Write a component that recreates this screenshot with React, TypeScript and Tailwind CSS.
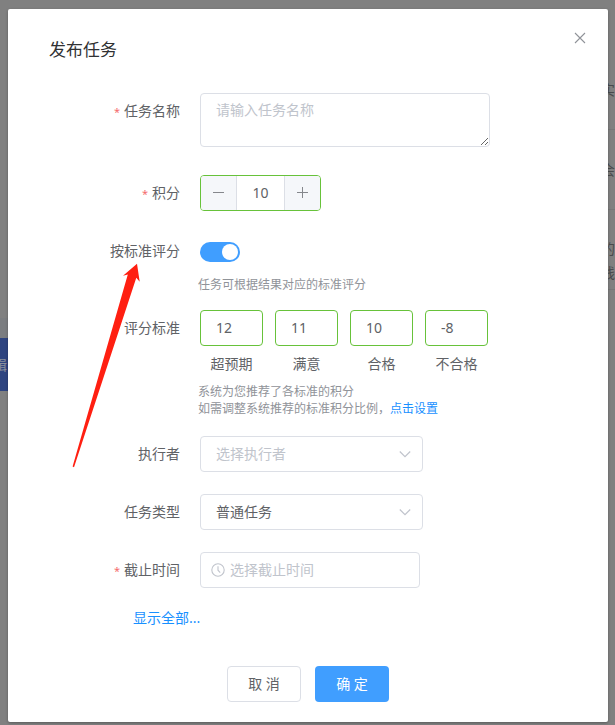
import React, { useState } from 'react';

const scores = [
  { id: 'score-great', value: '12', label: '超预期' },
  { id: 'score-good', value: '11', label: '满意' },
  { id: 'score-pass', value: '10', label: '合格' },
  { id: 'score-fail', value: '-8', label: '不合格' },
];

const FormItem = ({ id, label, required, className = '', children }: any) => (
  <div className={`flex ${className}`}>
    <label htmlFor={id} className="w-[172px] shrink-0 text-right text-sm leading-9 text-[#606266]">
      {required && <span className="mr-1 text-[11px] leading-none text-[#f56c6c]">*</span>}
      {label}
    </label>
    <div className="ml-5 min-w-0 flex-1">{children}</div>
  </div>
);

const SelectBox = ({ id, value, muted }: any) => (
  <div className="relative w-[223px]">
    <select
      id={id}
      className={`h-9 w-full appearance-none rounded border border-[#dcdfe6] bg-white px-[15px] text-sm outline-none ${muted ? 'text-[#c0c4cc]' : 'text-[#606266]'}`}
    >
      <option>{value}</option>
    </select>
    <svg className="pointer-events-none absolute top-3 right-3 h-3 w-3" viewBox="0 0 12 12" fill="none" stroke="#c0c4cc" strokeWidth="1.2">
      <path d="M0.8 3.5 L6 8.7 L11.2 3.5" />
    </svg>
  </div>
);

// the dimmed page that sits under the dialog
const Backdrop = () => (
  <div aria-hidden="true" className="absolute inset-0 flex justify-between overflow-hidden text-sm text-[#4a4b4d]">
    <div className="w-2 pt-[318px]">
      <div className="h-5 bg-[#7b7d80]" />
      <div className="flex h-[53px] items-center justify-end overflow-hidden bg-[#2e4480] pr-px text-[#8a8f9b]">
        <span className="shrink-0">辑</span>
      </div>
    </div>
    <div className="w-[14px] overflow-hidden pt-[50px] whitespace-nowrap">
      <div className="flex h-20 items-center border-b border-[#777] leading-6">实</div>
      <div className="flex h-20 items-center border-b border-[#777] leading-6">会</div>
      <div className="flex h-20 flex-col justify-end border-b border-[#777] pb-1 leading-6">
        <span>的</span>
        <span>线</span>
      </div>
    </div>
  </div>
);

export default function App() {
  const [points, setPoints] = useState(10);
  const [standard, setStandard] = useState(true);

  return (
    <div className="relative min-h-screen bg-[#808080] pt-[9px] pr-[7px] pb-[3px] pl-2 font-['Noto_Sans','Noto_Sans_CJK_SC',sans-serif]">
      <Backdrop />
      <div role="dialog" aria-labelledby="dialog-title" className="relative mx-auto max-w-[600px] rounded-xs bg-white pb-5 shadow-[0_1px_3px_rgba(0,0,0,0.3)]">
        <header className="flex items-start justify-between pt-[21px] pr-5 pl-[41px]">
          <h2 id="dialog-title" className="pt-2 text-[17px] leading-6 text-[#303133]">发布任务</h2>
          <button type="button" aria-label="关闭" className="flex h-4 w-4 items-center justify-center">
            <svg className="h-3 w-3" viewBox="0 0 12 12" fill="none" stroke="#909399" strokeWidth="1.1">
              <path d="M1 1 L11 11 M11 1 L1 11" />
            </svg>
          </button>
        </header>

        <form className="pt-[31px]">
          <FormItem id="name" label="任务名称" required className="mb-7">
            <textarea
              id="name"
              placeholder="请输入任务名称"
              className="block h-[54px] w-[290px] resize rounded border border-[#dcdfe6] px-[15px] py-[5px] text-sm leading-[21px] text-[#606266] outline-none placeholder:text-[#c0c4cc]"
            />
          </FormItem>

          <FormItem id="points" label="积分" required className="mb-[22px]">
            <div className="flex h-9 w-[121px] overflow-hidden rounded border border-[#67c23a]">
              <button type="button" aria-label="减少" onClick={() => setPoints(points - 1)} className="flex w-9 shrink-0 items-center justify-center border-r border-[#dcdfe6] bg-[#f5f7fa]">
                <svg className="h-3 w-3" viewBox="0 0 12 12" stroke="#85878c" strokeWidth="1">
                  <path d="M0 5.5 H11" />
                </svg>
              </button>
              <input id="points" value={points} onChange={(e) => setPoints(Number(e.target.value) || 0)} className="min-w-0 flex-1 text-center text-sm text-[#606266] outline-none" />
              <button type="button" aria-label="增加" onClick={() => setPoints(points + 1)} className="flex w-9 shrink-0 items-center justify-center border-l border-[#dcdfe6] bg-[#f5f7fa]">
                <svg className="h-3 w-3" viewBox="0 0 12 12" stroke="#85878c" strokeWidth="1">
                  <path d="M0 5.5 H11 M5.5 0 V11" />
                </svg>
              </button>
            </div>
          </FormItem>

          <FormItem id="standard" label="按标准评分" className="mb-[17px]">
            <div className="flex h-9 items-center pt-0.5">
              <input
                id="standard"
                type="checkbox"
                role="switch"
                checked={standard}
                onChange={(e) => setStandard(e.target.checked)}
                className="h-5 w-10 appearance-none rounded-full bg-[#dcdfe6] p-0.5 before:block before:h-4 before:w-4 before:rounded-full before:bg-white checked:bg-[#409eff] checked:before:ml-5"
              />
            </div>
            <p className="mt-[7px] -ml-0.5 text-xs leading-[17px] text-[#909399]">任务可根据结果对应的标准评分</p>
          </FormItem>

          <FormItem id="score-great" label="评分标准" className="mb-[19px]">
            <div className="flex gap-3">
              {scores.map((item) => (
                <div key={item.id} className="w-[63px]">
                  <input id={item.id} defaultValue={item.value} className="block h-9 w-full rounded border border-[#67c23a] px-[15px] pb-0.5 text-sm text-[#606266] outline-none" />
                  <label htmlFor={item.id} className="block text-center text-sm leading-9 text-[#606266]">{item.label}</label>
                </div>
              ))}
            </div>
            <p className="mt-px -ml-0.5 text-xs leading-[17px] text-[#909399]">
              系统为您推荐了各标准的积分
              <br />
              如需调整系统推荐的标准积分比例，<a href="#settings" className="text-[#1890ff]">点击设置</a>
            </p>
          </FormItem>

          <FormItem id="assignee" label="执行者" className="mb-[22px]">
            <SelectBox id="assignee" value="选择执行者" muted />
          </FormItem>

          <FormItem id="type" label="任务类型" className="mb-[22px]">
            <SelectBox id="type" value="普通任务" />
          </FormItem>

          <FormItem id="deadline" label="截止时间" required className="mb-5">
            <div className="flex h-9 w-[220px] items-center rounded border border-[#dcdfe6] pl-2.5">
              <svg className="h-[14px] w-[14px] shrink-0" viewBox="0 0 14 14" fill="none" stroke="#c0c4cc" strokeWidth="1.1">
                <circle cx="7" cy="7" r="6.2" />
                <path d="M7 3.2 V7.2 L9.2 9.6" />
              </svg>
              <input id="deadline" placeholder="选择截止时间" className="ml-[5px] min-w-0 flex-1 text-sm text-[#606266] outline-none placeholder:text-[#c0c4cc]" />
            </div>
          </FormItem>

          <a href="#more" className="ml-[125px] block w-fit text-sm leading-5 text-[#1890ff]">显示全部...</a>

          <div className="mt-[38px] flex justify-center gap-[14px]">
            <button type="button" className="h-9 w-[74px] rounded border border-[#dcdfe6] bg-white text-sm text-[#606266]">取 消</button>
            <button type="submit" className="h-9 w-[74px] rounded bg-[#409eff] text-sm text-white">确 定</button>
          </div>
        </form>

        {/* pointer to the scoring switch */}
        <svg className="pointer-events-none absolute top-[254px] left-16 h-[206px] w-[70px]" viewBox="0 0 70 206" fill="#ff1f11">
          <path d="M65 0.7 L51 12.8 L55.8 11.4 L0.6 203.6 L2 204.2 L64.3 14.7 L67.7 18.7 Z" />
        </svg>
      </div>
    </div>
  );
}
